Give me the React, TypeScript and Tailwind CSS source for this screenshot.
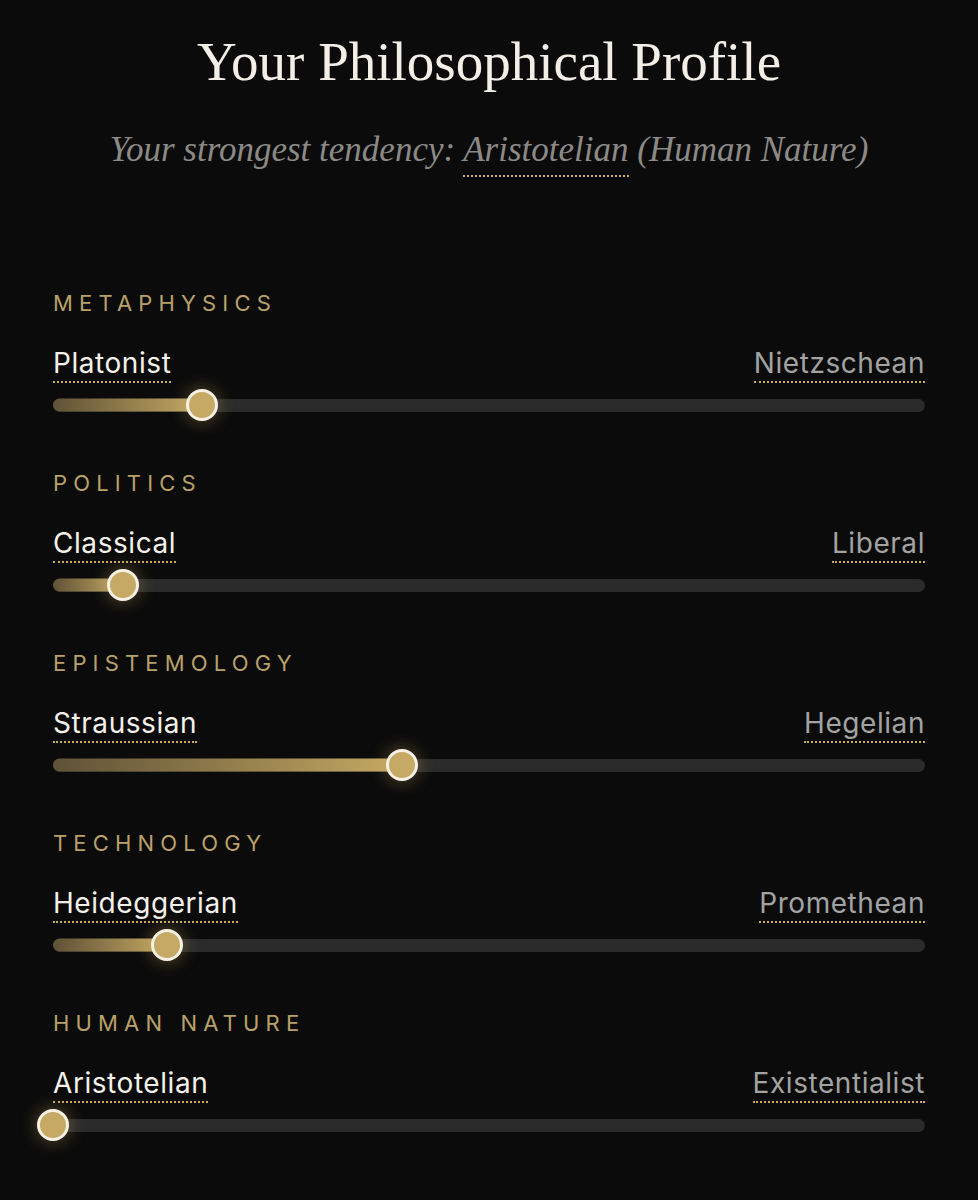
const axes = [
  { label: "Metaphysics", left: "Platonist", right: "Nietzschean", value: 17.1 },
  { label: "Politics", left: "Classical", right: "Liberal", value: 8 },
  { label: "Epistemology", left: "Straussian", right: "Hegelian", value: 40 },
  { label: "Technology", left: "Heideggerian", right: "Promethean", value: 13.1 },
  { label: "Human Nature", left: "Aristotelian", right: "Existentialist", value: 0 },
];

function Axis({ label, left, right, value }: { label: string; left: string; right: string; value: number }) {
  return (
    <div>
      <div className="text-[22px] leading-[28px] uppercase tracking-[0.28em] text-[#b9a169]">{label}</div>
      <div className="mt-[28px] flex items-start justify-between text-[28px] leading-[36px] tracking-[0.02em]">
        <span className="border-b-2 border-dotted border-[#c9ac62] text-[#f4f1ea]">{left}</span>
        <span className="border-b-2 border-dotted border-[#c9ac62] text-[#a3a3a3]">{right}</span>
      </div>
      <div className="relative mt-[6px] flex h-8 items-center">
        <div className="h-[13px] w-full rounded-full bg-[#2b2b2b]" />
        <div
          className="absolute left-0 top-1/2 h-[13px] -translate-y-1/2 rounded-full bg-gradient-to-r from-[#5f5236] to-[#c7aa63]"
          style={{ width: `${value}%` }}
        />
        <div
          className="absolute top-1/2 h-[32px] w-[32px] -translate-x-1/2 -translate-y-1/2 rounded-full border-[3px] border-[#f6f1e4] bg-[#c6a964] shadow-[0_0_18px_rgba(205,170,95,0.45)]"
          style={{ left: `${value}%` }}
        />
      </div>
    </div>
  );
}

export default function App() {
  return (
    <div className="min-h-[1200px] bg-[#0b0b0b] px-[53px] pt-[30px] font-['Inter',sans-serif]">
      <h1 className="text-center font-['Liberation_Serif',serif] text-[55px] leading-[64px] text-[#f3efe6]">
        Your Philosophical Profile
      </h1>
      <p className="mt-[34px] text-center font-['Liberation_Serif',serif] text-[35px] italic leading-[44px] text-[#8c8a86]">
        Your strongest tendency:{" "}
        <span className="border-b-2 border-dotted border-[#c9ac62] pb-[6px]">Aristotelian</span> (Human Nature)
      </p>
      <div className="mt-[117px] flex flex-col gap-[48px]">
        {axes.map((a) => (
          <Axis key={a.label} {...a} />
        ))}
      </div>
    </div>
  );
}
